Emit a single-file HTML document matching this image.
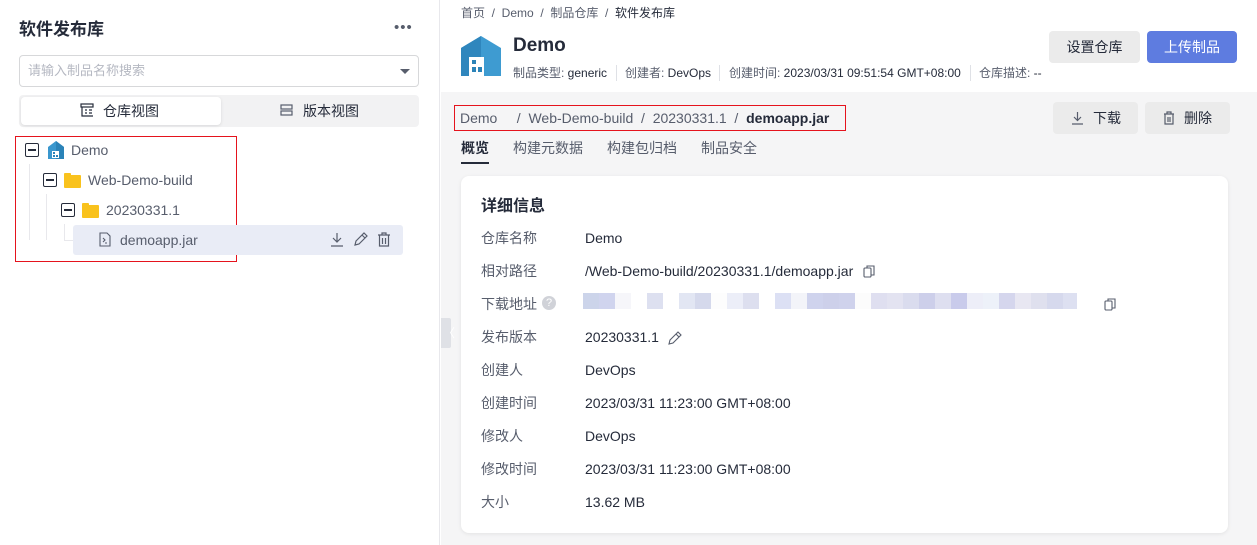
<!DOCTYPE html>
<html><head><meta charset="utf-8"><style>
*{margin:0;padding:0;box-sizing:border-box}
body{width:1257px;height:545px;overflow:hidden;background:#fff;font-family:"Liberation Sans","Noto Sans CJK SC",sans-serif;color:#252b3a;position:relative}
.a{position:absolute;white-space:nowrap;line-height:18px}
.lbl{color:#575d6c;font-size:14px}
.val{color:#252b3a;font-size:14px}
.bx{position:absolute;width:14px;height:14px;border:1.5px solid #252b3a;border-radius:2px;background:#fff}
.bx:after{content:"";position:absolute;left:2px;right:2px;top:5px;height:1.5px;background:#252b3a}
.fold{position:absolute;width:17px;height:13px;background:#f9c21d;border-radius:1px}
.fold:before{content:"";position:absolute;left:0;top:-2px;width:7px;height:3px;background:#f9c21d;border-radius:1px 1px 0 0}
.btn{position:absolute;border-radius:4px;font-size:14px;text-align:center}
.blur{position:absolute;top:293px;height:16px;width:16px}
</style></head><body>
<div class="a" style="left:0;top:0;width:440px;height:545px;border-right:1px solid #e8e8ec"></div>
<div class="a" style="left:19px;top:21px;font-size:17px;font-weight:bold;color:#252b3a">软件发布库</div>
<div class="a" style="left:394px;top:19px;font-size:15px;color:#575d6c;letter-spacing:1px">•••</div>
<div class="a" style="left:19px;top:55px;width:400px;height:32px;border:1px solid #d7d8da;border-radius:4px"></div>
<div class="a" style="left:28px;top:62px;font-size:13px;color:#b5b8c2">请输入制品名称搜索</div>
<div class="a" style="left:400px;top:69px;width:0;height:0;border-left:5px solid transparent;border-right:5px solid transparent;border-top:5px solid #575d6c"></div>
<div class="a" style="left:19px;top:95px;width:400px;height:32px;background:#f2f2f3;border-radius:4px"></div>
<div class="a" style="left:21px;top:97px;width:200px;height:28px;background:#fff;border-radius:4px;box-shadow:0 1px 3px rgba(0,0,0,.1)"></div>
<svg class="a" style="left:80px;top:103px" width="14" height="14" viewBox="0 0 14 14" fill="none" stroke="#252b3a" stroke-width="1.2"><rect x="1" y="1" width="12" height="3"/><path d="M2 4v9h11M5 7h2M9 7h3M5 10h2M9 10h3"/></svg>
<div class="a" style="left:103px;top:102px;font-size:14px;color:#252b3a">仓库视图</div>
<svg class="a" style="left:280px;top:104px" width="13" height="12" viewBox="0 0 13 12" fill="none" stroke="#575d6c" stroke-width="1.2"><rect x="1" y="1" width="11" height="4"/><rect x="1" y="7" width="11" height="4"/></svg>
<div class="a" style="left:303px;top:102px;font-size:14px;color:#252b3a">版本视图</div>
<div class="a" style="left:15px;top:136px;width:222px;height:126px;border:1px solid #e5131d"></div>
<div class="a" style="left:29px;top:164px;width:1px;height:76px;background:#e8e8ec"></div>
<div class="a" style="left:46px;top:194px;width:1px;height:46px;background:#e8e8ec"></div>
<div class="a" style="left:64px;top:224px;width:1px;height:16px;background:#e8e8ec"></div>
<div class="a" style="left:64px;top:240px;width:9px;height:1px;background:#e8e8ec"></div>
<div class="bx" style="left:25px;top:143px"></div>
<svg class="a" style="left:48px;top:141px" width="16" height="18" viewBox="0 0 16 18"><path d="M0 6L8 0L16 6V18H0Z" fill="#3a97ce"/><path d="M8 0L16 6V18H8Z" fill="#2b83b8"/><rect x="4" y="10" width="7" height="7" fill="#fff"/><rect x="5" y="11" width="2" height="2" fill="#2b83b8"/><rect x="5" y="14" width="2" height="2" fill="#2b83b8"/><rect x="8" y="14" width="2" height="2" fill="#2b83b8"/></svg>
<div class="a" style="left:71px;top:141px;font-size:14px;color:#575d6c">Demo</div>
<div class="bx" style="left:43px;top:173px"></div>
<div class="fold" style="left:64px;top:175px"></div>
<div class="a" style="left:88px;top:171px;font-size:14px;color:#575d6c">Web-Demo-build</div>
<div class="bx" style="left:61px;top:203px"></div>
<div class="fold" style="left:82px;top:205px"></div>
<div class="a" style="left:106px;top:201px;font-size:14px;color:#575d6c">20230331.1</div>
<div class="a" style="left:73px;top:225px;width:330px;height:30px;background:#e9ecf6;border-radius:3px"></div>
<svg class="a" style="left:99px;top:232px" width="12" height="15" viewBox="0 0 12 15" fill="none" stroke="#575d6c" stroke-width="1.1"><path d="M1 1h7l3 3v10H1Z"/><path d="M4 6l2 2l-2 2M6 11h2"/></svg>
<div class="a" style="left:120px;top:231px;font-size:14px;color:#575d6c">demoapp.jar</div>
<svg class="a" style="left:330px;top:232px" width="14" height="15" viewBox="0 0 14 15" fill="none" stroke="#575d6c" stroke-width="1.2"><path d="M7 1v9M3 6l4 4l4-4M1 14h12"/></svg>
<svg class="a" style="left:353px;top:232px" width="15" height="15" viewBox="0 0 15 15" fill="none" stroke="#575d6c" stroke-width="1.2"><path d="M2 13l1-4l8-8l3 3l-8 8Z M9 3l3 3"/></svg>
<svg class="a" style="left:377px;top:232px" width="14" height="15" viewBox="0 0 14 15" fill="none" stroke="#575d6c" stroke-width="1.2"><path d="M1 3h12M5 3V1h4v2M2.5 3v11h9V3M5.5 6v6M8.5 6v6"/></svg>
<div class="a" style="left:441px;top:92px;width:816px;height:453px;background:#f5f5f6"></div>
<div class="a" style="left:441px;top:318px;width:10px;height:30px;background:#dfe1e6;border-radius:0 2px 2px 0"></div>
<div class="a" style="left:443px;top:324px;font-size:12px;color:#fff">〈</div>
<div class="a" style="left:461px;top:4px;font-size:12px;color:#575d6c">首页 &nbsp;/ &nbsp;Demo &nbsp;/ &nbsp;制品仓库 &nbsp;/ &nbsp;<span style="color:#252b3a">软件发布库</span></div>
<svg class="a" style="left:461px;top:36px" width="40" height="40" viewBox="0 0 40 40"><path d="M0 12L20 0L40 12V40H0Z" fill="#3e9bd1"/><path d="M0 12L20 0V40H0Z" fill="#2f86bd"/><rect x="8" y="21" width="15" height="19" fill="#fff"/><rect x="11" y="24" width="4" height="4" fill="#2b83b8"/><rect x="11" y="31" width="4" height="5" fill="#2b83b8"/><rect x="17" y="31" width="4" height="5" fill="#2b83b8"/></svg>
<div class="a" style="left:513px;top:37px;font-size:19px;font-weight:bold;color:#252b3a">Demo</div>
<div class="a" style="left:513px;top:64px;font-size:12px;color:#575d6c">制品类型: <span style="color:#252b3a">generic</span></div>
<div class="a" style="left:616px;top:65px;width:1px;height:16px;background:#dfe1e6"></div>
<div class="a" style="left:625px;top:64px;font-size:12px;color:#575d6c">创建者: <span style="color:#252b3a">DevOps</span></div>
<div class="a" style="left:719px;top:65px;width:1px;height:16px;background:#dfe1e6"></div>
<div class="a" style="left:729px;top:64px;font-size:12px;color:#575d6c">创建时间: <span style="color:#252b3a">2023/03/31 09:51:54 GMT+08:00</span></div>
<div class="a" style="left:970px;top:65px;width:1px;height:16px;background:#dfe1e6"></div>
<div class="a" style="left:979px;top:64px;font-size:12px;color:#575d6c">仓库描述: <span style="color:#252b3a">--</span></div>
<div class="btn" style="left:1049px;top:31px;width:91px;height:32px;line-height:32px;background:#ebebeb;color:#252b3a">设置仓库</div>
<div class="btn" style="left:1147px;top:31px;width:90px;height:32px;line-height:32px;background:#5e7ce0;color:#fff">上传制品</div>
<div class="a" style="left:454px;top:105px;width:392px;height:26px;border:1px solid #e5131d"></div>
<div class="a" style="left:460px;top:109px;font-size:14px;color:#575d6c">Demo &nbsp;&nbsp;&nbsp;&nbsp;/ &nbsp;Web-Demo-build &nbsp;/ &nbsp;20230331.1 &nbsp;/ &nbsp;<b style="color:#252b3a">demoapp.jar</b></div>
<div class="btn" style="left:1053px;top:102px;width:85px;height:32px;background:#ebebeb"></div>
<svg class="a" style="left:1071px;top:111px" width="13" height="14" viewBox="0 0 13 14" fill="none" stroke="#575d6c" stroke-width="1.2"><path d="M6.5 1v8M3 6l3.5 3.5L10 6M1 13h11"/></svg>
<div class="a" style="left:1093px;top:109px;font-size:14px;color:#252b3a">下载</div>
<div class="btn" style="left:1145px;top:102px;width:85px;height:32px;background:#ebebeb"></div>
<svg class="a" style="left:1163px;top:111px" width="12" height="14" viewBox="0 0 12 14" fill="none" stroke="#575d6c" stroke-width="1.2"><path d="M1 3h10M4 3V1h4v2M2 3v10h8V3M5 6v5M7 6v5"/></svg>
<div class="a" style="left:1184px;top:109px;font-size:14px;color:#252b3a">删除</div>
<div class="a" style="left:461px;top:139px;font-size:14px;color:#252b3a;font-weight:bold">概览</div>
<div class="a" style="left:461px;top:162px;width:28px;height:2px;background:#252b3a"></div>
<div class="a" style="left:513px;top:139px;font-size:14px;color:#575d6c">构建元数据</div>
<div class="a" style="left:607px;top:139px;font-size:14px;color:#575d6c">构建包归档</div>
<div class="a" style="left:701px;top:139px;font-size:14px;color:#575d6c">制品安全</div>
<div class="a" style="left:461px;top:176px;width:767px;height:357px;background:#fff;border-radius:8px;box-shadow:0 1px 4px rgba(0,0,0,.08)"></div>
<div class="a" style="left:481px;top:198px;font-size:16px;font-weight:bold;color:#252b3a">详细信息</div>
<div class="a lbl" style="left:481px;top:229px">仓库名称</div><div class="a val" style="left:585px;top:229px">Demo</div>
<div class="a lbl" style="left:481px;top:262px">相对路径</div><div class="a val" style="left:585px;top:262px">/Web-Demo-build/20230331.1/demoapp.jar</div>
<svg class="a" style="left:863px;top:265px" width="12" height="13" viewBox="0 0 12 13" fill="none" stroke="#575d6c" stroke-width="1.1"><rect x="1" y="3" width="7" height="9" rx="1"/><path d="M4 3V1h7v9H8"/></svg>
<div class="a lbl" style="left:481px;top:295px">下载地址</div>
<div class="a" style="left:542px;top:296px;width:14px;height:14px;border-radius:50%;background:#d0d2d8;color:#fff;font-size:11px;text-align:center;line-height:14px">?</div>
<div class="blur" style="left:583px;background:#ccd4ea"></div><div class="blur" style="left:599px;background:#d0d4ee"></div><div class="blur" style="left:615px;background:#f6f6fa"></div><div class="blur" style="left:647px;background:#dde0f0"></div><div class="blur" style="left:679px;background:#e2e6f3"></div><div class="blur" style="left:695px;background:#d5d9ec"></div><div class="blur" style="left:711px;background:#fdfdfd"></div><div class="blur" style="left:727px;background:#eceef8"></div><div class="blur" style="left:743px;background:#dddfef"></div><div class="blur" style="left:775px;background:#dce0f4"></div><div class="blur" style="left:791px;background:#f3f4f9"></div><div class="blur" style="left:807px;background:#cfd3ed"></div><div class="blur" style="left:823px;background:#cdd0ea"></div><div class="blur" style="left:839px;background:#cfd2ec"></div><div class="blur" style="left:855px;background:#fcfcfc"></div><div class="blur" style="left:871px;background:#dfdff0"></div><div class="blur" style="left:887px;background:#e3e3f1"></div><div class="blur" style="left:903px;background:#dadcee"></div><div class="blur" style="left:919px;background:#cdcfea"></div><div class="blur" style="left:935px;background:#dedff0"></div><div class="blur" style="left:951px;background:#c9cbeb"></div><div class="blur" style="left:967px;background:#edeef8"></div><div class="blur" style="left:983px;background:#edf1f9"></div><div class="blur" style="left:999px;background:#d5d6ed"></div><div class="blur" style="left:1015px;background:#e8e7f2"></div><div class="blur" style="left:1031px;background:#dfe0ee"></div><div class="blur" style="left:1047px;background:#d6d9ed"></div><div class="blur" style="left:1063px;width:14px;background:#dde0f1"></div>
<svg class="a" style="left:1104px;top:298px" width="12" height="13" viewBox="0 0 12 13" fill="none" stroke="#575d6c" stroke-width="1.1"><rect x="1" y="3" width="7" height="9" rx="1"/><path d="M4 3V1h7v9H8"/></svg>
<div class="a lbl" style="left:481px;top:328px">发布版本</div><div class="a val" style="left:585px;top:328px">20230331.1</div>
<svg class="a" style="left:667px;top:331px" width="15" height="15" viewBox="0 0 15 15" fill="none" stroke="#575d6c" stroke-width="1.1"><path d="M2 13l1-4l8-8l3 3l-8 8Z M9 3l3 3"/></svg>
<div class="a lbl" style="left:481px;top:361px">创建人</div><div class="a val" style="left:585px;top:361px">DevOps</div>
<div class="a lbl" style="left:481px;top:394px">创建时间</div><div class="a val" style="left:585px;top:394px">2023/03/31 11:23:00 GMT+08:00</div>
<div class="a lbl" style="left:481px;top:427px">修改人</div><div class="a val" style="left:585px;top:427px">DevOps</div>
<div class="a lbl" style="left:481px;top:460px">修改时间</div><div class="a val" style="left:585px;top:460px">2023/03/31 11:23:00 GMT+08:00</div>
<div class="a lbl" style="left:481px;top:493px">大小</div><div class="a val" style="left:585px;top:493px">13.62 MB</div>
</body></html>
